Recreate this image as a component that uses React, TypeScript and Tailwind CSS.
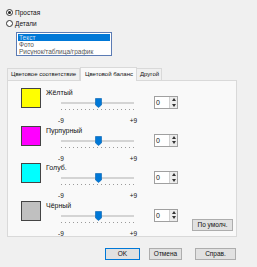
const colors = [
  { name: 'Жёлтый', swatch: 'bg-[#ffff00]' },
  { name: 'Пурпурный', swatch: 'bg-[#ff00ff]' },
  { name: 'Голуб.', swatch: 'bg-[#00ffff]' },
  { name: 'Чёрный', swatch: 'bg-[#c0c0c0]' },
];

function Radio({ checked, label }: { checked?: boolean; label: string }) {
  return (
    <div className="flex items-center h-[11px]">
      <div className="w-[7px] h-[7px] rounded-full border border-[#333] bg-white flex items-center justify-center">
        {checked && <div className="w-[3px] h-[3px] rounded-full bg-[#222]" />}
      </div>
      <span className="ml-[2px] text-[6.5px] text-[#111]">{label}</span>
    </div>
  );
}

function ColorRow({ name, swatch }: { name: string; swatch: string }) {
  const ticks = Array.from({ length: 19 });
  return (
    <div className="flex h-[37.5px] shrink-0">
      <div className={`ml-[13px] w-[20px] h-[20px] border border-[#444] ${swatch}`} />
      <div className="ml-[5px] w-[103px] flex flex-col">
        <div className="text-[7px] leading-[7px] h-[7px] mt-[1px] text-[#111]">{name}</div>
        {/* slider */}
        <div className="ml-[15px] w-[73px] h-[11px] relative mt-[1px]">
          <div className="mt-[5px] h-[2px] bg-[#d4d4d4]" />
          <svg className="absolute left-[34px] top-[1px]" width="7" height="10" viewBox="0 0 7 10">
            <path d="M0.5 0.5 H6.5 V7 L3.5 9.5 L0.5 7 Z" fill="#0078d7" stroke="#005fb0" strokeWidth="0.6" />
          </svg>
        </div>
        <div className="ml-[15px] w-[73px] flex justify-between mt-[1px] h-[2px]">
          {ticks.map((_, i) => (
            <div key={i} className="w-[1px] h-[1px] bg-[#9a9a9a]" />
          ))}
        </div>
        <div className="flex text-[6.5px] leading-[7px] text-[#111] mt-[6px]">
          <span className="ml-[12px]">-9</span>
          <span className="ml-[66px]">+9</span>
        </div>
      </div>
      <div className="ml-[5px] mt-[8px] w-[24px] h-[13px] border border-[#a0a0a0] bg-white flex">
        <div className="flex-1 text-[7px] leading-[11px] pl-[1px] text-[#111]">0</div>
        <div className="w-[8px] flex flex-col bg-[#ececec] border-l border-[#d0d0d0]">
          <div className="flex-1 flex items-center justify-center">
            <svg width="4" height="3" viewBox="0 0 4 3"><path d="M2 0 L4 3 H0 Z" fill="#333" /></svg>
          </div>
          <div className="flex-1 flex items-center justify-center">
            <svg width="4" height="3" viewBox="0 0 4 3"><path d="M0 0 H4 L2 3 Z" fill="#333" /></svg>
          </div>
        </div>
      </div>
    </div>
  );
}

export default function App() {
  return (
    <div className="w-[257px] h-[267px] bg-[#f0f0f0] overflow-hidden font-['Liberation_Sans',Arial,sans-serif] flex flex-col">
      <div className="pl-[6px] pt-[7px]">
        <Radio checked label="Простая" />
        <Radio label="Детали" />
      </div>

      <div className="ml-[16px] mt-[3px] w-[96px] h-[24px] shrink-0 overflow-hidden border border-[#5b7bb4] bg-white text-[6.5px] leading-[7px] text-[#555] pt-[0.5px] px-[1px]">
        <div className="bg-[#0078d7] text-[#cfe3f7] pl-[1px]">Текст</div>
        <div className="pl-[1px]">Фото</div>
        <div className="pl-[1px] whitespace-nowrap">Рисунок/таблица/график</div>
      </div>

      <div className="ml-[7px] mt-[10px] flex items-end h-[14px] shrink-0">
        <div className="w-[73px] h-[12px] border border-b-0 border-[#d9d9d9] bg-[#f0f0f0] text-[6px] leading-[11px] pl-[3px] text-[#111] whitespace-nowrap overflow-hidden">
          Цветовое соответствие
        </div>
        <div className="w-[57px] h-[14px] border border-b-0 border-[#d9d9d9] bg-[#f9f9f9] text-[6px] leading-[12px] pl-[4px] text-[#111] -mb-[1px] relative z-10 whitespace-nowrap overflow-hidden">
          Цветовой баланс
        </div>
        <div className="w-[25px] h-[12px] border border-b-0 border-l-0 border-[#d9d9d9] bg-[#f0f0f0] text-[6px] leading-[11px] pl-[3px] text-[#111] overflow-hidden">
          Другой
        </div>
      </div>

      <div className="ml-[7px] w-[230px] h-[157px] shrink-0 border border-[#d9d9d9] bg-[#f9f9f9] flex flex-col pt-[7px]">
        {colors.map((c) => (
          <ColorRow key={c.name} name={c.name} swatch={c.swatch} />
        ))}
        <div className="flex justify-end pr-[3px] -mt-[19px]">
          <div className="w-[41px] h-[12px] border border-[#adadad] bg-[#e1e1e1] text-[6.5px] leading-[10px] text-center text-[#111]">
            По умолч.
          </div>
        </div>
      </div>

      <div className="flex mt-[11px] ml-[105px]">
        <div className="w-[35px] h-[12px] border border-[#0078d7] bg-[#e1e1e1] text-[6.5px] leading-[10px] text-center text-[#111]">OK</div>
        <div className="ml-[9px] w-[33px] h-[12px] border border-[#adadad] bg-[#e1e1e1] text-[6.5px] leading-[10px] text-center text-[#111]">Отмена</div>
        <div className="ml-[13px] w-[41px] h-[12px] border border-[#adadad] bg-[#e1e1e1] text-[6.5px] leading-[10px] text-center text-[#111]">Справ.</div>
      </div>
    </div>
  );
}
